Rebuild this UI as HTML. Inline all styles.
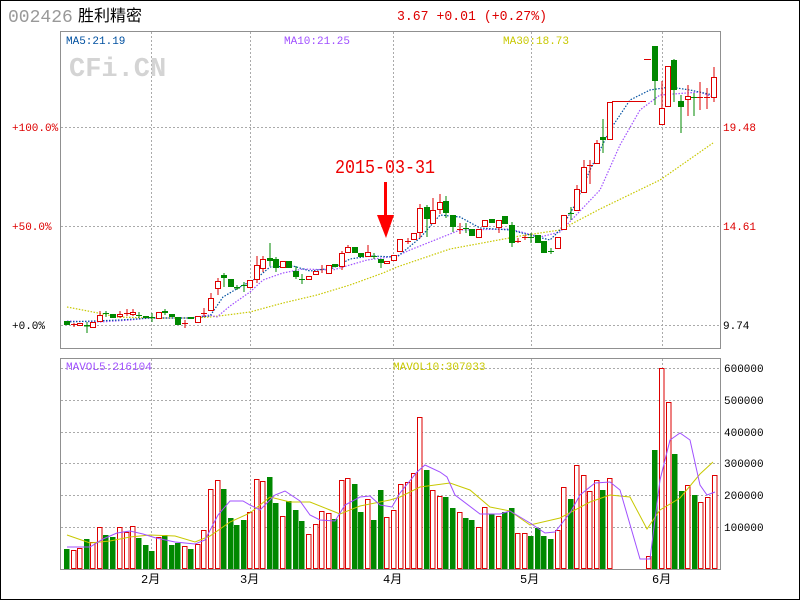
<!DOCTYPE html>
<html><head><meta charset="utf-8"><style>
html,body{margin:0;padding:0;background:#fff;}
svg{display:block;}
text{font-family:"Liberation Mono","Noto Sans CJK SC",monospace;}
</style></head><body>
<svg width="800" height="600" viewBox="0 0 800 600" xmlns="http://www.w3.org/2000/svg">
<rect x="0.5" y="0.5" width="799" height="599" fill="#fff" stroke="#000" stroke-width="1"/>
<text x="8" y="22" font-family="Liberation Sans,sans-serif" font-size="18" fill="#999">002426</text>
<text x="78" y="21" font-family="Liberation Sans,'Noto Sans CJK SC',sans-serif" font-size="16" fill="#000">胜利精密</text>
<text x="397" y="20" font-size="14" fill="#d00" textLength="150" lengthAdjust="spacingAndGlyphs">3.67 +0.01 (+0.27%)</text>

<!-- price panel -->
<g stroke="#aaa" stroke-dasharray="2 2" stroke-width="1">
<line x1="61" y1="127.5" x2="720" y2="127.5"/><line x1="61" y1="226.5" x2="720" y2="226.5"/><line x1="61" y1="325.5" x2="720" y2="325.5"/>
<line x1="151.5" y1="32" x2="151.5" y2="348"/><line x1="250.5" y1="32" x2="250.5" y2="348"/><line x1="393.5" y1="32" x2="393.5" y2="348"/><line x1="531.5" y1="32" x2="531.5" y2="348"/><line x1="662.5" y1="32" x2="662.5" y2="348"/>
</g>
<rect x="60.5" y="31.5" width="660" height="317" fill="none" stroke="#909090"/>
<text x="66" y="44" font-size="11" fill="#0050a0">MA5:21.19</text>
<text x="284" y="44" font-size="11" fill="#a050ff">MA10:21.25</text>
<text x="503" y="44" font-size="11" fill="#c8c800">MA30:18.73</text>
<text x="69" y="76" font-family="Liberation Sans,sans-serif" font-weight="bold" font-size="27" fill="#d4d4d4">CFi.CN</text>
<text x="12" y="131" font-size="11" fill="#d00">+100.0%</text>
<text x="12" y="230" font-size="11" fill="#d00">+50.0%</text>
<text x="12" y="329" font-size="11" fill="#000">+0.0%</text>
<text x="723" y="131" font-size="11" fill="#d00">19.48</text>
<text x="723" y="230" font-size="11" fill="#d00">14.61</text>
<text x="723" y="329" font-size="11" fill="#000">9.74</text>

<!-- MA lines -->
<polyline fill="none" stroke="#c8c800" stroke-width="1.2" stroke-dasharray="1.5 1.5" points="67,307 93,312 117,317 150,318 193,318 210,317 227,315 250,312 283,303 317,295 350,285 383,273 397,267 450,249 520,236 560,230 600,209 660,180 713,143"/>
<polyline fill="none" stroke="#a050ff" stroke-width="1.2" stroke-dasharray="1.5 1.5" points="67,321 100,322 130,320 150,318 190,318 210,315 217,317 230,306 250,292 263,280 283,273 303,269 333,270 367,260 397,256 410,250 440,238 460,230 510,229 540,237 560,232 600,190 620,145 640,110 660,95 700,92 713,97"/>
<polyline fill="none" stroke="#0050a0" stroke-width="1.2" stroke-dasharray="1.5 1.5" points="67,322 120,320 150,318 190,318 210,316 223,297 240,287 257,278 270,267 293,266 310,271 333,268 350,259 370,256 397,257 420,238 440,215 460,217 480,228 510,230 530,235 550,240 560,230 575,205 590,170 610,130 630,100 650,90 670,87 690,90 713,95"/>

<!-- red candles -->
<g stroke="#d00" stroke-width="1" fill="#fff">
<line x1="612" y1="101.5" x2="646" y2="101.5"/>
<line x1="644" y1="59.5" x2="651" y2="59.5"/>
<path d="M74,323V327 M93.5,322V327 M100,311V315 M120,311V318 M127,309V316 M133,309V316 M159,312V318 M185,320V328 M204,308V317 M211,293V298 M218,278V295 M257,256V283 M263,256V272 M322,265V273 M342,251V270 M348,245V252 M368,245V256 M408,238V244 M420,204V238 M433,198V223 M440,194V214 M460,223V234 M499,220V233 M518,238V243 M525,235V240 M577,185V210 M584,160V192 M590,160V184 M597,140V163 M662,81V124 M688,85V116 M700,82V110 M707,88V109 M714,67V102"/>
<path d="M71,324.5H77 M124,313.5H130 M182,323.5H188 M201,313.5H207 M405,241.5H411 M457,229.5H463 M515,241.5H521 M522,237.5H528 M587,165.5H593 M697,97.5H703 M704,97.5H710"/>
<rect x="77.5" y="323.5" width="5" height="2"/>
<rect x="90.5" y="322.5" width="5" height="5"/>
<rect x="97.5" y="315.5" width="5" height="6"/>
<rect x="117.5" y="314.5" width="5" height="2"/>
<rect x="130.5" y="312.5" width="5" height="2"/>
<rect x="156.5" y="312.5" width="5" height="6"/>
<rect x="195.5" y="316.5" width="5" height="6"/>
<rect x="208.5" y="298.5" width="5" height="12"/>
<rect x="215.5" y="281.5" width="5" height="7"/>
<rect x="247.5" y="280.5" width="5" height="7"/>
<rect x="254.5" y="265.5" width="5" height="14"/>
<rect x="260.5" y="259.5" width="5" height="9"/>
<rect x="280.5" y="261.5" width="5" height="6"/>
<rect x="306.5" y="276.5" width="5" height="3"/>
<rect x="313.5" y="271.5" width="5" height="3"/>
<rect x="326.5" y="265.5" width="5" height="8"/>
<rect x="339.5" y="253.5" width="5" height="13"/>
<rect x="345.5" y="247.5" width="5" height="5"/>
<rect x="365.5" y="252.5" width="5" height="4"/>
<rect x="384.5" y="261.5" width="5" height="2"/>
<rect x="391.5" y="255.5" width="5" height="5"/>
<rect x="397.5" y="239.5" width="5" height="12"/>
<rect x="411.5" y="233.5" width="5" height="6"/>
<rect x="417.5" y="208.5" width="5" height="24"/>
<rect x="430.5" y="210.5" width="5" height="13"/>
<rect x="437.5" y="202.5" width="5" height="7"/>
<rect x="476.5" y="229.5" width="5" height="8"/>
<rect x="482.5" y="220.5" width="5" height="6"/>
<rect x="496.5" y="220.5" width="5" height="7"/>
<rect x="555.5" y="237.5" width="5" height="11"/>
<rect x="561.5" y="215.5" width="5" height="14"/>
<rect x="574.5" y="189.5" width="5" height="21"/>
<rect x="581.5" y="167.5" width="5" height="25"/>
<rect x="594.5" y="143.5" width="5" height="20"/>
<rect x="607.5" y="102.5" width="5" height="37"/>
<rect x="659.5" y="108.5" width="5" height="16"/>
<rect x="665.5" y="66.5" width="5" height="40"/>
<rect x="685.5" y="96.5" width="5" height="3"/>
<rect x="711.5" y="77.5" width="5" height="20"/>
</g>
<!-- green candles -->
<g stroke="#008800" stroke-width="1" fill="#008800">
<path d="M87,322V333 M106,311V317 M139,312V318 M152,313V322 M165,309V315 M224,273V287 M237,285V290 M244,282V292 M270,243V266 M276,257V272 M296,266V279 M302,274V284 M374,253V259 M381,259V268 M427,205V237 M446,196V218 M453,215V232 M466,223V233 M512,222V247 M531,233V243 M551,248V254 M571,207V220 M603,119V153 M655,46V105 M674,59V102 M681,95V133 M694,93V116"/>
<path d="M103,313.5H109 M136,315.5H142 M149,317.5H155 M241,285.5H247 M299,279.5H305 M371,256.5H377 M463,228.5H469 M528,237.5H534 M548,251.5H554 M568,213.5H574 M691,97.5H697"/>
</g>
<g fill="#008800">
<rect x="64" y="321" width="6" height="4"/>
<rect x="84" y="325" width="6" height="1.5"/>
<rect x="110" y="314" width="6" height="4"/>
<rect x="143" y="316" width="6" height="2"/>
<rect x="162" y="311" width="6" height="2"/>
<rect x="169" y="314" width="6" height="3"/>
<rect x="175" y="317" width="6" height="8"/>
<rect x="188" y="317" width="6" height="2"/>
<rect x="221" y="275" width="6" height="3"/>
<rect x="228" y="279" width="6" height="8"/>
<rect x="234" y="287" width="6" height="1.5"/>
<rect x="267" y="258" width="6" height="3"/>
<rect x="273" y="259" width="6" height="9"/>
<rect x="286" y="261" width="6" height="7"/>
<rect x="293" y="271" width="6" height="6"/>
<rect x="332" y="264" width="6" height="3"/>
<rect x="352" y="247" width="6" height="6"/>
<rect x="358" y="253" width="6" height="4"/>
<rect x="378" y="259" width="6" height="4"/>
<rect x="424" y="207" width="6" height="12"/>
<rect x="443" y="201" width="6" height="12"/>
<rect x="450" y="215" width="6" height="12"/>
<rect x="469" y="229" width="6" height="7"/>
<rect x="489" y="219" width="6" height="4"/>
<rect x="502" y="216" width="6" height="8"/>
<rect x="509" y="225" width="6" height="18"/>
<rect x="535" y="235" width="6" height="8"/>
<rect x="541" y="241" width="6" height="12"/>
<rect x="600" y="137" width="6" height="3"/>
<rect x="652" y="46" width="6" height="35"/>
<rect x="671" y="60" width="6" height="30"/>
<rect x="678" y="101" width="6" height="6"/>
</g>

<!-- arrow & date -->
<text x="335" y="173" font-family="Liberation Sans,sans-serif" font-size="19" fill="#e00" textLength="100" lengthAdjust="spacingAndGlyphs">2015-03-31</text>
<rect x="384" y="182" width="3" height="35" fill="#f00"/>
<polygon points="377,215 394,215 386,238" fill="#f00"/>

<!-- volume panel -->
<g stroke="#aaa" stroke-dasharray="2 2" stroke-width="1">
<line x1="61" y1="368.5" x2="720" y2="368.5"/><line x1="61" y1="400.5" x2="720" y2="400.5"/><line x1="61" y1="432.5" x2="720" y2="432.5"/><line x1="61" y1="463.5" x2="720" y2="463.5"/><line x1="61" y1="495.5" x2="720" y2="495.5"/><line x1="61" y1="527.5" x2="720" y2="527.5"/>
<line x1="151.5" y1="359" x2="151.5" y2="569"/><line x1="250.5" y1="359" x2="250.5" y2="569"/><line x1="393.5" y1="359" x2="393.5" y2="569"/><line x1="531.5" y1="359" x2="531.5" y2="569"/><line x1="662.5" y1="359" x2="662.5" y2="569"/>
</g>
<rect x="60.5" y="358.5" width="660" height="211" fill="none" stroke="#909090"/>
<text x="66" y="370" font-size="11" fill="#a050ff">MAVOL5:216104</text>
<text x="393" y="370" font-size="11" fill="#c8c800">MAVOL10:307033</text>
<g font-size="11" fill="#000">
<text x="724" y="372">600000</text><text x="724" y="404">500000</text><text x="724" y="436">400000</text><text x="724" y="467">300000</text><text x="724" y="499">200000</text><text x="724" y="531">100000</text>
</g>
<g font-family="Liberation Sans,'Noto Sans CJK SC',sans-serif" font-size="12" fill="#000">
<text x="141" y="583">2月</text><text x="240" y="583">3月</text><text x="383" y="583">4月</text><text x="520" y="583">5月</text><text x="652" y="583">6月</text>
</g>

<g fill="#008800">
<rect x="64" y="549" width="5.5" height="20"/><rect x="84" y="539" width="5.5" height="30"/><rect x="103" y="535" width="5.5" height="34"/><rect x="110" y="537" width="5.5" height="32"/><rect x="136" y="538" width="5.5" height="31"/><rect x="143" y="545" width="5.5" height="24"/><rect x="149" y="551" width="5.5" height="18"/><rect x="162" y="535" width="5.5" height="34"/><rect x="169" y="545" width="5.5" height="24"/><rect x="175" y="543" width="5.5" height="26"/><rect x="188" y="549" width="5.5" height="20"/>
<rect x="221" y="489" width="5.5" height="80"/><rect x="228" y="518" width="5.5" height="51"/><rect x="234" y="525" width="5.5" height="44"/><rect x="241" y="520" width="5.5" height="49"/><rect x="267" y="477" width="5.5" height="92"/><rect x="273" y="503" width="5.5" height="66"/><rect x="286" y="501" width="5.5" height="68"/><rect x="293" y="510" width="5.5" height="59"/><rect x="299" y="521" width="5.5" height="48"/><rect x="332" y="519" width="5.5" height="50"/><rect x="352" y="484" width="5.5" height="85"/><rect x="358" y="512" width="5.5" height="57"/><rect x="371" y="520" width="5.5" height="49"/><rect x="378" y="490" width="5.5" height="79"/>
<rect x="424" y="470" width="5.5" height="99"/><rect x="443" y="497" width="5.5" height="72"/><rect x="450" y="508" width="5.5" height="61"/><rect x="463" y="518" width="5.5" height="51"/><rect x="469" y="520" width="5.5" height="49"/><rect x="489" y="514" width="5.5" height="55"/><rect x="502" y="512" width="5.5" height="57"/><rect x="509" y="508" width="5.5" height="61"/><rect x="528" y="536" width="5.5" height="33"/><rect x="535" y="528" width="5.5" height="41"/><rect x="541" y="536" width="5.5" height="33"/><rect x="548" y="539" width="5.5" height="30"/><rect x="568" y="499" width="5.5" height="70"/><rect x="600" y="490" width="5.5" height="79"/>
<rect x="652" y="450" width="5.5" height="119"/><rect x="672" y="454" width="5.5" height="115"/><rect x="679" y="491" width="5.5" height="78"/><rect x="692" y="495" width="5.5" height="74"/>
</g>
<g fill="#fff" stroke="#d00" stroke-width="1">
<rect x="71.5" y="550.5" width="4.5" height="18"/><rect x="77.5" y="548.5" width="4.5" height="20"/><rect x="90.5" y="542.5" width="4.5" height="26"/><rect x="97.5" y="527.5" width="4.5" height="41"/><rect x="117.5" y="527.5" width="4.5" height="41"/><rect x="124.5" y="532.5" width="4.5" height="36"/><rect x="130.5" y="526.5" width="4.5" height="42"/><rect x="156.5" y="537.5" width="4.5" height="31"/><rect x="182.5" y="546.5" width="4.5" height="22"/><rect x="195.5" y="544.5" width="4.5" height="24"/><rect x="201.5" y="530.5" width="4.5" height="38"/><rect x="208.5" y="489.5" width="4.5" height="79"/><rect x="215.5" y="480.5" width="4.5" height="88"/>
<rect x="247.5" y="512.5" width="4.5" height="56"/><rect x="254.5" y="479.5" width="4.5" height="89"/><rect x="260.5" y="481.5" width="4.5" height="87"/><rect x="280.5" y="516.5" width="4.5" height="52"/><rect x="306.5" y="534.5" width="4.5" height="34"/><rect x="313.5" y="524.5" width="4.5" height="44"/><rect x="319.5" y="511.5" width="4.5" height="57"/><rect x="326.5" y="513.5" width="4.5" height="55"/><rect x="339.5" y="480.5" width="4.5" height="88"/><rect x="345.5" y="478.5" width="4.5" height="90"/><rect x="365.5" y="499.5" width="4.5" height="69"/><rect x="384.5" y="517.5" width="4.5" height="51"/><rect x="391.5" y="510.5" width="4.5" height="58"/><rect x="398.5" y="484.5" width="4.5" height="84"/>
<rect x="405.5" y="482.5" width="4.5" height="86"/><rect x="411.5" y="473.5" width="4.5" height="95"/><rect x="417.5" y="417.5" width="4.5" height="151"/><rect x="430.5" y="490.5" width="4.5" height="78"/><rect x="437.5" y="496.5" width="4.5" height="72"/><rect x="457.5" y="512.5" width="4.5" height="56"/><rect x="476.5" y="527.5" width="4.5" height="41"/><rect x="482.5" y="507.5" width="4.5" height="61"/><rect x="496.5" y="516.5" width="4.5" height="52"/><rect x="515.5" y="533.5" width="4.5" height="35"/><rect x="522.5" y="533.5" width="4.5" height="35"/><rect x="555.5" y="530.5" width="4.5" height="38"/><rect x="561.5" y="487.5" width="4.5" height="81"/><rect x="574.5" y="465.5" width="4.5" height="103"/><rect x="581.5" y="475.5" width="4.5" height="93"/><rect x="587.5" y="491.5" width="4.5" height="77"/><rect x="594.5" y="480.5" width="4.5" height="88"/><rect x="607.5" y="478.5" width="4.5" height="90"/>
<rect x="646.5" y="556.5" width="4.5" height="12"/><rect x="659.5" y="368.5" width="4.5" height="200"/><rect x="666.5" y="402.5" width="4.5" height="166"/><rect x="685.5" y="485.5" width="4.5" height="83"/><rect x="698.5" y="502.5" width="4.5" height="66"/><rect x="705.5" y="497.5" width="4.5" height="71"/><rect x="712.5" y="475.5" width="4.5" height="93"/>
</g>
<polyline fill="none" stroke="#c8c800" stroke-width="1" points="67,535 90,543 110,541 130,537 150,535 175,536 195,542 210,536 230,522 250,513 270,497 290,502 310,502 330,510 340,514 360,506 390,500 400,497 420,487 450,483 470,490 490,507 510,511 530,525 560,518 590,502 610,495 630,497 647,529 660,510 680,498 700,474 713,462"/>
<polyline fill="none" stroke="#a050ff" stroke-width="1" points="67,547 90,547 103,539 117,533 130,531 143,534 156,538 175,542 195,544 205,540 218,515 230,501 243,501 250,505 260,510 275,495 285,491 300,501 310,515 320,520 335,521 345,505 360,497 370,496 380,505 392,507 400,493 417,472 425,465 440,472 447,477 455,495 480,514 500,514 510,511 530,523 545,533 555,532 570,513 580,495 595,483 610,482 620,490 640,559 650,559 660,480 670,440 680,433 690,440 700,485 707,495 715,492"/>
</svg>
</body></html>
